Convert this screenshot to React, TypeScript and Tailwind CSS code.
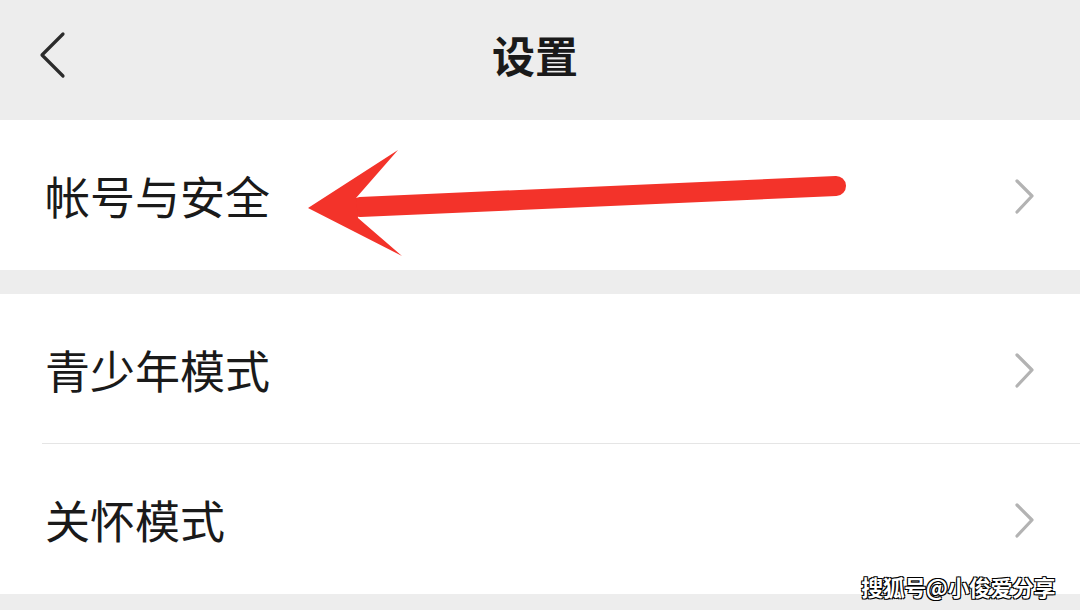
const font = { fontFamily: '"Noto Sans CJK SC", "Noto Sans", sans-serif' };

function Row({ label, divider }: { label: string; divider?: boolean }) {
    return (
        <div className="relative h-[150px] bg-white flex items-center pl-[45px] pr-[44px]">
            <span className="flex-1 text-[45px] leading-none text-[#1a1a1a]">{label}</span>
            <svg width="22" height="38" viewBox="0 0 22 38" className="mt-[4px]">
                <polyline points="3,3 18,18 3,34" fill="none" stroke="#b3b3b3" strokeWidth="3.2" strokeLinecap="round" strokeLinejoin="round" />
            </svg>
            {divider && <div className="absolute left-[42px] right-0 bottom-0 h-px bg-[#e5e5e5]" />}
        </div>
    );
}

export default function App() {
    return (
        <div className="relative w-[1080px] h-[610px] overflow-hidden bg-[#ededed]" style={font}>
            {/* header */}
            <div className="relative h-[120px] flex items-center justify-center">
                <svg width="30" height="50" viewBox="0 0 30 50" className="absolute left-[38px] top-[30px]">
                    <polyline points="25,4 4,25 25,46" fill="none" stroke="#2b2b2b" strokeWidth="3.2" strokeLinecap="round" strokeLinejoin="round" />
                </svg>
                <h1 className="text-[43px] font-bold text-[#1a1a1a] leading-none mt-[-12px] ml-[-10px]">设置</h1>
            </div>

            <div className="relative">
                <Row label="帐号与安全" />
                {/* red annotation arrow */}
                <svg width="1080" height="150" viewBox="0 120 1080 150" className="absolute left-0 top-0 pointer-events-none">
                    <line x1="836" y1="186" x2="360" y2="207" stroke="#f3332a" strokeWidth="20" strokeLinecap="round" />
                    <polygon points="308,208 398,150 356,198 358,218 402,256" fill="#f3332a" />
                </svg>
            </div>

            <div className="h-[24px]" />
            <Row label="青少年模式" divider />
            <Row label="关怀模式" />

            <div className="absolute right-[25px] bottom-[13px] text-[22px] font-bold leading-none text-white tracking-[-0.5px] [text-shadow:1px_1px_0_#000,-1px_-1px_0_#000,1px_-1px_0_#000,-1px_1px_0_#000]">
                搜狐号@小俊爱分享
            </div>
        </div>
    );
}
